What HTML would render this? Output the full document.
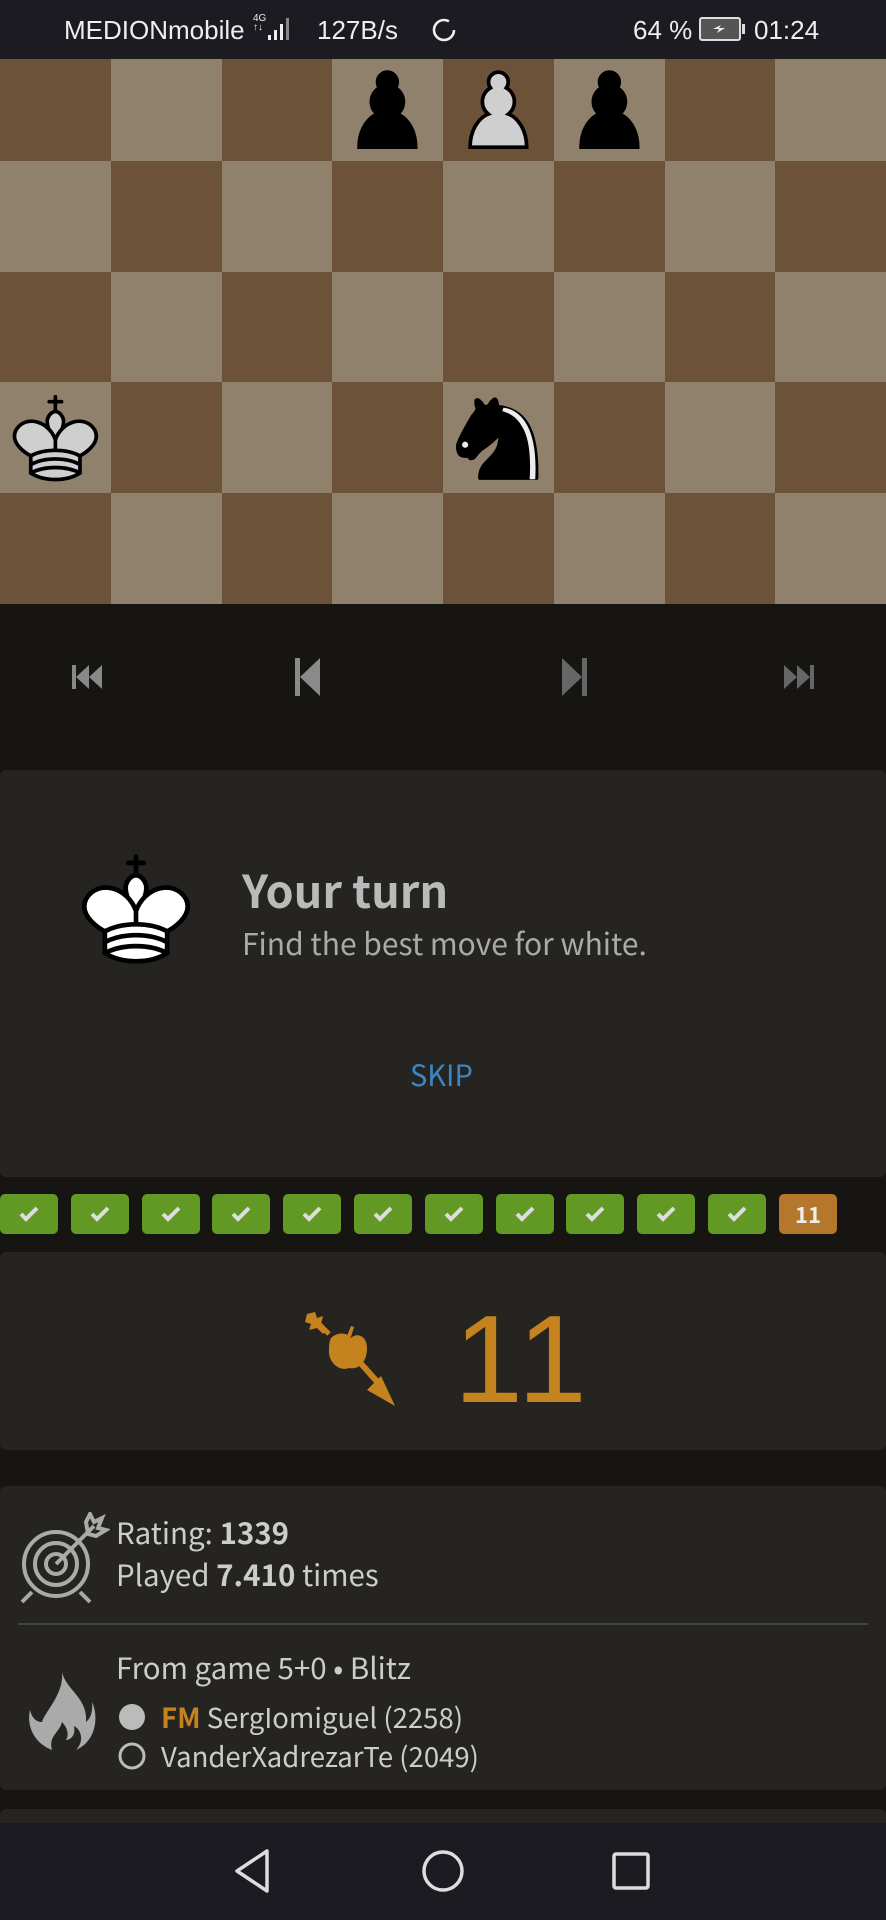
<!DOCTYPE html>
<html><head><meta charset="utf-8">
<style>
*{margin:0;padding:0;box-sizing:border-box}
body{width:886px;height:1920px;background:#161512;position:relative;overflow:hidden;font-family:"Noto Sans CJK JP","Liberation Sans",sans-serif;color:#bababa}
.abs{position:absolute}
#board{position:absolute;left:0;top:50px;width:886px;height:554px;overflow:hidden}
.sq{position:absolute;width:110.75px;height:110.75px}
.d{background:#6b5239}.l{background:#8f816b}
.sq svg{width:100%;height:100%;display:block}
#status{position:absolute;left:0;top:0;width:886px;height:59px;background:#1b1b21;color:#eee;font-family:"Liberation Sans",sans-serif;font-size:26px;z-index:5}
.panel{position:absolute;left:0;width:886px;background:#262421;border-radius:6px}
.box{position:absolute;top:1194px;width:58px;height:40px;background:#629924;border-radius:5px}
.box svg{position:absolute;left:19px;top:12px}
#nav{position:absolute;left:0;top:1823px;width:886px;height:97px;background:#1b1b21}
</style></head><body>
<div id="board">
<div class="sq d" style="left:0;top:0"></div>
<div class="sq l" style="left:110.75px;top:0"></div>
<div class="sq d" style="left:221.5px;top:0"></div>
<div class="sq l" style="left:332.25px;top:0"><svg viewBox="0 0 45 45"><path d="M22.5 9c-2.21 0-4 1.79-4 4 0 .89.29 1.71.78 2.38C17.33 16.5 16 18.59 16 21c0 2.030.94 3.84 2.41 5.03C15.41 27.09 11 31.58 11 39.5H34c0-7.92-4.41-12.41-7.41-13.470C28.06 24.84 29 23.03 29 21c0-2.41-1.33-4.5-3.28-5.620.49-.67.78-1.49.78-2.38 0-2.21-1.79-4-4-4z" fill="#000" stroke="#000" stroke-width="1.5"/></svg></div>
<div class="sq d" style="left:443px;top:0"><svg viewBox="0 0 45 45"><path d="M22.5 9c-2.21 0-4 1.79-4 4 0 .89.29 1.71.78 2.38C17.33 16.5 16 18.59 16 21c0 2.03.94 3.84 2.41 5.03C15.41 27.09 11 31.58 11 39.5H34c0-7.92-4.41-12.41-7.41-13.47C28.06 24.84 29 23.03 29 21c0-2.41-1.33-4.5-3.28-5.62.49-.67.78-1.49.78-2.38 0-2.21-1.790-4-4-4z" fill="#cfcfcf" stroke="#000" stroke-width="1.5"/></svg></div>
<div class="sq l" style="left:553.75px;top:0"><svg viewBox="0 0 45 45"><path d="M22.5 9c-2.21 0-4 1.79-4 4 0 .89.29 1.71.78 2.38C17.33 16.5 16 18.59 16 21c0 2.03.94 3.84 2.41 5.03C15.41 27.09 11 31.58 11 39.5H34c0-7.92-4.41-12.41-7.41-13.47C28.06 24.84 29 23.03 29 21c0-2.41-1.33-4.5-3.28-5.62.49-.67.78-1.49.78-2.38 0-2.21-1.79-4-4-4z" fill="#000" stroke="#000" stroke-width="1.5"/></svg></div>
<div class="sq d" style="left:664.5px;top:0"></div>
<div class="sq l" style="left:775.25px;top:0"></div>
<div class="sq l" style="left:0;top:110.75px"></div>
<div class="sq d" style="left:110.75px;top:110.75px"></div>
<div class="sq l" style="left:221.5px;top:110.75px"></div>
<div class="sq d" style="left:332.25px;top:110.75px"></div>
<div class="sq l" style="left:443px;top:110.75px"></div>
<div class="sq d" style="left:553.75px;top:110.75px"></div>
<div class="sq l" style="left:664.5px;top:110.75px"></div>
<div class="sq d" style="left:775.25px;top:110.75px"></div>
<div class="sq d" style="left:0;top:221.5px"></div>
<div class="sq l" style="left:110.75px;top:221.5px"></div>
<div class="sq d" style="left:221.5px;top:221.5px"></div>
<div class="sq l" style="left:332.25px;top:221.5px"></div>
<div class="sq d" style="left:443px;top:221.5px"></div>
<div class="sq l" style="left:553.75px;top:221.5px"></div>
<div class="sq d" style="left:664.5px;top:221.5px"></div>
<div class="sq l" style="left:775.25px;top:221.5px"></div>
<div class="sq l" style="left:0;top:332.25px"><svg viewBox="0 0 45 45"><g fill="none" stroke="#000" stroke-width="1.5" stroke-linecap="round" stroke-linejoin="round"><path d="M22.5 11.63V6M20 8h5"/><path d="M22.5 25s4.5-7.5 3-10.5c0 0-1-2.5-3-2.5s-3 2.5-3 2.5c-1.5 3 3 10.5 3 10.5" fill="#cfcfcf"/><path d="M12.5 37c5.5 3.5 14.5 3.5 20 0v-7s9-4.5 6-10.5c-4-6.5-13.5-3.5-16 4V27v-3.5c-2.5-7.5-12-10.5-16-4-3 6 6 10.5 6 10.5v7" fill="#cfcfcf"/><path d="M12.5 30c5.5-3 14.5-3 20 0M12.5 33.5c5.5-3 14.5-3 20 0M12.5 37c5.5-3 14.5-3 20 0"/></g></svg></div>
<div class="sq d" style="left:110.75px;top:332.25px"></div>
<div class="sq l" style="left:221.5px;top:332.25px"></div>
<div class="sq d" style="left:332.25px;top:332.25px"></div>
<div class="sq l" style="left:443px;top:332.25px"><svg viewBox="0 0 45 45"><g stroke="#000" stroke-width="1.5" stroke-linecap="round" stroke-linejoin="round"><path d="M22 10c10.5 1 16.5 8 16 29H15c0-9 10-6.5 8-21" fill="#000"/><path d="M24 18c.38 2.91-5.55 7.37-8 9-3 2-2.82 4.34-5 4-1.042-.94 1.41-3.04 0-3-1 0 .19 1.23-1 2-1 0-4.003 1-4-4 0-2 6-12 6-12s1.890-1.9 2-3.5c-.73-.994-.5-2-.5-3 1-1 3 2.5 3 2.5h2s.78-1.992 2.5-3c1 0 1 3 1 3" fill="#000"/><path d="M9.5 25.5a.5.5 0 1 1-1 0 .5.5 0 1 1 1 0z" fill="#ececec" stroke="#ececec"/><path d="M24.55 10.4l-.45 1.45.5.15c3.15 1 5.65 2.49 7.9 6.75S35.750 29.06 35.25 39l-.05.5h2.25l.05-.5c.5-10.06-.88-16.85-3.25-21.34-2.37-4.49-5.79-6.640-9.190-7.16l-.51-.1z" fill="#ececec" stroke="none"/></g></svg></div>
<div class="sq d" style="left:553.75px;top:332.25px"></div>
<div class="sq l" style="left:664.5px;top:332.25px"></div>
<div class="sq d" style="left:775.25px;top:332.25px"></div>
<div class="sq d" style="left:0;top:443px"></div>
<div class="sq l" style="left:110.75px;top:443px"></div>
<div class="sq d" style="left:221.5px;top:443px"></div>
<div class="sq l" style="left:332.25px;top:443px"></div>
<div class="sq d" style="left:443px;top:443px"></div>
<div class="sq l" style="left:553.75px;top:443px"></div>
<div class="sq d" style="left:664.5px;top:443px"></div>
<div class="sq l" style="left:775.25px;top:443px"></div>
</div>

<div id="status">
<span class="abs" style="left:64px;top:15px">MEDIONmobile</span>
<span class="abs" style="left:253px;top:14px;font-size:10px;line-height:9px">4G<br>↑↓</span>
<svg class="abs" style="left:268px;top:16px" width="30" height="26"><rect x="0" y="19" width="3" height="5" fill="#eee"/><rect x="6" y="14" width="3" height="10" fill="#eee"/><rect x="12" y="8" width="3" height="16" fill="#eee"/><rect x="18" y="2" width="3" height="22" fill="#888"/></svg>
<span class="abs" style="left:317px;top:15px">127B/s</span>
<svg class="abs" style="left:431px;top:17px" width="26" height="26"><circle cx="13" cy="13" r="10" fill="none" stroke="#eee" stroke-width="2.6" stroke-dasharray="52 11"/></svg>
<span class="abs" style="left:633px;top:15px">64 %</span>
<svg class="abs" style="left:699px;top:17px" width="48" height="24"><rect x="1" y="1" width="40" height="22" rx="2" fill="#555" stroke="#ddd" stroke-width="2"/><rect x="43" y="7" width="3" height="10" fill="#ddd"/><path d="M14 12h6l-2 4 8-5h-6l2-3z" fill="#eee"/></svg>
<span class="abs" style="left:754px;top:15px">01:24</span>
</div>

<svg class="abs" style="left:72px;top:663px" width="34" height="28"><rect x="0" y="2" width="4" height="24" fill="#888"/><path d="M4 14 17 2v24zM17 14 30 2v24z" fill="#888"/></svg>
<svg class="abs" style="left:295px;top:658px" width="30" height="38"><rect x="0" y="0" width="5" height="38" fill="#8a8a8a"/><path d="M5 19 25 0v38z" fill="#8a8a8a"/></svg>
<svg class="abs" style="left:562px;top:658px" width="30" height="38"><rect x="20" y="0" width="5" height="38" fill="#666"/><path d="M20 19 0 0v38z" fill="#666"/></svg>
<svg class="abs" style="left:780px;top:663px" width="34" height="28"><rect x="30" y="2" width="4" height="24" fill="#666"/><path d="M30 14 17 2v24zM17 14 4 2v24z" fill="#666"/></svg>

<div class="panel" style="top:770px;height:407px"></div>
<svg class="abs" style="left:66px;top:838px" width="140" height="140" viewBox="0 0 45 45"><g fill="none" stroke="#000" stroke-width="1.5" stroke-linecap="round" stroke-linejoin="round"><path d="M22.5 11.63V6M20 8h5"/><path d="M22.5 25s4.5-7.5 3-10.5c0 0-1-2.5-3-2.5s-3 2.5-3 2.5c-1.5 3 3 10.5 3 10.5" fill="#fff"/><path d="M12.5 37c5.5 3.5 14.5 3.5 20 0v-7s9-4.5 6-10.5c-4-6.5-13.5-3.5-16 4V27v-3.5c-2.5-7.5-12-10.5-16-4-3 6 6 10.5 6 10.5v7" fill="#fff"/><path d="M12.5 30c5.5-3 14.5-3 20 0M12.5 33.5c5.5-3 14.5-3 20 0M12.5 37c5.5-3 14.5-3 20 0"/></g></svg>
<div class="abs" style="left:242px;top:856px;font-size:45px;font-weight:bold;color:#bababa">Your turn</div>
<div class="abs" style="left:242px;top:920px;font-size:30px;color:#aaa">Find the best move for white.</div>
<div class="abs" style="left:410px;top:1053px;font-size:29px;color:#3b86c6">SKIP</div>

<div class="box" style="left:0"><svg width="20" height="16"><path d="M2 8l5 5 11-11" stroke="#ddd" stroke-width="4" fill="none"/></svg></div>
<div class="box" style="left:71px"><svg width="20" height="16"><path d="M2 8l5 5 11-11" stroke="#ddd" stroke-width="4" fill="none"/></svg></div>
<div class="box" style="left:142px"><svg width="20" height="16"><path d="M2 8l5 5 11-11" stroke="#ddd" stroke-width="4" fill="none"/></svg></div>
<div class="box" style="left:212px"><svg width="20" height="16"><path d="M2 8l5 5 11-11" stroke="#ddd" stroke-width="4" fill="none"/></svg></div>
<div class="box" style="left:283px"><svg width="20" height="16"><path d="M2 8l5 5 11-11" stroke="#ddd" stroke-width="4" fill="none"/></svg></div>
<div class="box" style="left:354px"><svg width="20" height="16"><path d="M2 8l5 5 11-11" stroke="#ddd" stroke-width="4" fill="none"/></svg></div>
<div class="box" style="left:425px"><svg width="20" height="16"><path d="M2 8l5 5 11-11" stroke="#ddd" stroke-width="4" fill="none"/></svg></div>
<div class="box" style="left:496px"><svg width="20" height="16"><path d="M2 8l5 5 11-11" stroke="#ddd" stroke-width="4" fill="none"/></svg></div>
<div class="box" style="left:566px"><svg width="20" height="16"><path d="M2 8l5 5 11-11" stroke="#ddd" stroke-width="4" fill="none"/></svg></div>
<div class="box" style="left:637px"><svg width="20" height="16"><path d="M2 8l5 5 11-11" stroke="#ddd" stroke-width="4" fill="none"/></svg></div>
<div class="box" style="left:708px"><svg width="20" height="16"><path d="M2 8l5 5 11-11" stroke="#ddd" stroke-width="4" fill="none"/></svg></div>
<div class="box" style="left:779px;background:#b5772b;color:#eee;font-weight:bold;font-size:22px;text-align:center;line-height:40px">11</div>

<div class="panel" style="top:1252px;height:198px"></div>
<svg class="abs" style="left:303px;top:1308px" width="102" height="100" viewBox="0 0 102 100"><g fill="#c4831f"><path d="M4 6l8-2 2 6 6-2-2 8 6 6-4 4-6-6-8 2 2-6-6-2z"/><path d="M14 14l12 12" stroke="#c4831f" stroke-width="5"/><path d="M28 30c6-6 16-6 20 0 6-6 16-2 16 10 0 14-8 22-18 20-10 4-20-6-20-16 0-6 0-10 2-14z"/><path d="M44 28l4-10 3 1-3 10z"/><path d="M44 40l34 38" stroke="#c4831f" stroke-width="6"/><path d="M64 82l28 16-14-30z"/></g></svg>
<div class="abs" style="left:454px;top:1290px;font-size:124px;line-height:140px;color:#c4831f;font-family:'Liberation Sans',sans-serif;letter-spacing:4px">11</div>

<div class="panel" style="top:1486px;height:304px"></div>
<svg class="abs" style="left:18px;top:1512px" width="92" height="92" viewBox="0 0 92 92"><g fill="none" stroke="#aaa" stroke-width="4"><circle cx="38" cy="52" r="32"/><circle cx="38" cy="52" r="21"/><circle cx="38" cy="52" r="10"/><path d="M38 52 76 14"/><path d="M68 10l4-8 4 8 8-4-4 10 8 2-10 6-8-2z"/><path d="M14 80 4 90M62 80l10 10"/></g></svg>
<div class="abs" style="left:116px;top:1511px;font-size:29.5px;color:#ccc">Rating: <b>1339</b></div>
<div class="abs" style="left:116px;top:1553px;font-size:29.5px;color:#ccc">Played <b>7.410</b> times</div>
<div class="abs" style="left:18px;top:1623px;width:850px;height:2px;background:#444"></div>
<svg class="abs" style="left:28px;top:1670px" width="68" height="84" viewBox="0 0 68 84"><path d="M34 2c4 18 26 26 24 50 8-6 6-20 6-20 6 12 6 38-16 48 8-8 6-20-2-24 2 10-4 14-8 14 4-6 0-14-4-18-2 10-14 14-10 28-16-6-26-22-22-40 2 8 6 12 12 12C18 40 36 24 34 2z" fill="#aaa"/></svg>
<div class="abs" style="left:116px;top:1646px;font-size:29.5px;color:#ccc">From game 5+0 • Blitz</div>
<svg class="abs" style="left:117px;top:1702px" width="30" height="30"><circle cx="15" cy="15" r="13" fill="#bbb"/></svg>
<div class="abs" style="left:161px;top:1696px;font-size:27.5px;color:#ccc"><b style="color:#c4831f">FM</b> SergIomiguel (2258)</div>
<svg class="abs" style="left:117px;top:1741px" width="30" height="30"><circle cx="15" cy="15" r="12" fill="none" stroke="#bbb" stroke-width="3"/></svg>
<div class="abs" style="left:161px;top:1735px;font-size:27.5px;color:#ccc">VanderXadrezarTe (2049)</div>
<div class="panel" style="top:1809px;height:40px"></div>

<div id="nav">
<svg class="abs" style="left:233px;top:24px" width="40" height="48"><path d="M34 4 4 24l30 20z" fill="none" stroke="#ddd" stroke-width="3.5" stroke-linejoin="round"/></svg>
<svg class="abs" style="left:421px;top:26px" width="44" height="44"><circle cx="22" cy="22" r="19" fill="none" stroke="#ddd" stroke-width="3.5"/></svg>
<svg class="abs" style="left:611px;top:28px" width="40" height="40"><rect x="3" y="3" width="34" height="34" rx="2" fill="none" stroke="#ddd" stroke-width="3.5"/></svg>
</div>
</body></html>
